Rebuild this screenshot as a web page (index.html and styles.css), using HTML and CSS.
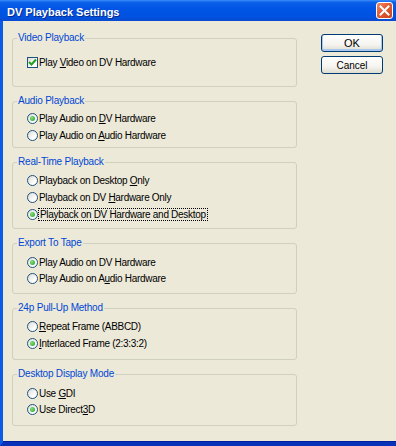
FILE: index.html
```html
<!DOCTYPE html>
<html>
  <head>
    <title>DV Playback Settings</title>
    <link rel="stylesheet" href="styles.css">
  </head>
  <body>
    <div class="window">
      <div class="titlebar">
        <span class="title">DV Playback Settings</span>
        <span class="close">
          <svg width="11" height="11" viewBox="0 0 11 11"><path d="M1.5 1.5 L9.5 9.5 M9.5 1.5 L1.5 9.5" stroke="#fff" stroke-width="2" stroke-linecap="square"/></svg>
        </span>
      </div>
      <div class="client">
        <div class="groups">
          <fieldset class="group g-video">
            <legend>Video Playback</legend>
            <label class="opt"><span class="check"><svg width="9" height="9" viewBox="0 0 9 9"><path d="M1 4 L3.5 6.5 L8 1.5" stroke="#21a121" stroke-width="2" fill="none"/></svg></span><span>Play <u>V</u>ideo on DV Hardware</span></label>
          </fieldset>

          <fieldset class="group g-audio">
            <legend>Audio Playback</legend>
            <label class="opt"><span class="radio on"></span><span>Play Audio on <u>D</u>V Hardware</span></label>
            <label class="opt"><span class="radio"></span><span>Play Audio on <u>A</u>udio Hardware</span></label>
          </fieldset>

          <fieldset class="group g-realtime">
            <legend>Real-Time Playback</legend>
            <label class="opt"><span class="radio"></span><span>Playback on Desktop <u>O</u>nly</span></label>
            <label class="opt"><span class="radio"></span><span>Playback on DV <u>H</u>ardware Only</span></label>
            <label class="opt"><span class="radio on"></span><span class="focus">Playback on DV Hardware and Desktop</span></label>
          </fieldset>

          <fieldset class="group g-export">
            <legend>Export To Tape</legend>
            <label class="opt"><span class="radio on"></span><span>Play Audio on DV Hardware</span></label>
            <label class="opt"><span class="radio"></span><span>Play Audio on A<u>u</u>dio Hardware</span></label>
          </fieldset>

          <fieldset class="group g-pulldown">
            <legend>24p Pull-Up Method</legend>
            <label class="opt"><span class="radio"></span><span><u>R</u>epeat Frame (ABBCD)</span></label>
            <label class="opt"><span class="radio on"></span><span><u>I</u>nterlaced Frame (2:3:3:2)</span></label>
          </fieldset>

          <fieldset class="group g-display">
            <legend>Desktop Display Mode</legend>
            <label class="opt"><span class="radio"></span><span>Use <u>G</u>DI</span></label>
            <label class="opt"><span class="radio on"></span><span>Use Direct<u>3</u>D</span></label>
          </fieldset>
        </div>

        <div class="buttons">
          <button class="btn default">OK</button>
          <button class="btn">Cancel</button>
        </div>
      </div>
    </div>
  </body>
</html>
```

FILE: styles.css
```css
body {
  margin: 0;
  font-family: "Liberation Sans", Arial, sans-serif;
  font-size: 10px;
  color: #000;
  background: #ece9d8;
}

.window {
  width: 396px;
  height: 446px;
  display: flex;
  flex-direction: column;
}

.titlebar {
  height: 21px;
  flex: none;
  display: flex;
  align-items: center;
  justify-content: space-between;
  padding: 0 3px 0 7px;
  background: linear-gradient(#3a8cf8 0%, #0a5fe8 12%, #0055e5 40%, #0052e0 80%, #0a4ad0 100%);
}

.title {
  color: #fff;
  font-weight: bold;
  font-size: 11px;
  padding-top: 2px;
  text-shadow: 1px 1px 0 #0a2a8a;
}

.close {
  width: 17px;
  height: 17px;
  box-sizing: border-box;
  border: 1px solid #fff;
  border-radius: 3px;
  background: linear-gradient(135deg, #f08a68 0%, #e25a32 45%, #c9431f 100%);
  display: flex;
  align-items: center;
  justify-content: center;
}

.client {
  flex: 1;
  display: flex;
  border-left: 3px solid #0a5ce6;
  border-bottom: 4px solid #0833b8;
  box-shadow: inset 0 -1px 0 #001ea0;
  background: #ece9d8;
}

.groups {
  width: 285px;
  margin: 11px 0 0 9px;
  display: flex;
  flex-direction: column;
  gap: 8px;
}

.group {
  margin: 0;
  min-width: 0;
  border: 1px solid #d0d0bf;
  border-radius: 3px;
  padding: 4px 0 7px 14px;
}

.group legend {
  color: #0046d5;
  font-size: 10px;
  line-height: 12px;
  padding: 0 1px;
  margin-left: -10px;
  letter-spacing: -0.2px;
}

.g-video { padding-top: 10px; padding-bottom: 15px; }
.g-audio { padding-top: 3px; padding-bottom: 3px; }
.g-realtime { padding-top: 4px; padding-bottom: 5px; }
.g-export { padding-top: 5px; padding-bottom: 7px; }
.g-pulldown { padding-top: 4px; padding-bottom: 7px; }
.g-display { padding-top: 5px; padding-bottom: 8px; }

.opt {
  display: flex;
  align-items: center;
  gap: 1px;
  height: 17px;
  white-space: nowrap;
  letter-spacing: -0.3px;
}

.g-export .opt,
.g-display .opt {
  height: 16px;
}

.radio {
  width: 11px;
  height: 11px;
  box-sizing: border-box;
  border: 1px solid #1c5180;
  border-radius: 50%;
  background: linear-gradient(135deg, #dcdbd3 0%, #fff 70%);
  display: flex;
  align-items: center;
  justify-content: center;
  flex: none;
}

.radio.on::after {
  content: "";
  width: 5px;
  height: 5px;
  border-radius: 50%;
  background: radial-gradient(circle at 35% 35%, #7fe07f, #21a121);
}

.check {
  width: 11px;
  height: 11px;
  box-sizing: border-box;
  border: 1px solid #1c5180;
  background: linear-gradient(135deg, #dcdbd3 0%, #fff 70%);
  display: flex;
  align-items: center;
  justify-content: center;
  flex: none;
}

.focus {
  outline: 1px dotted #000;
  padding: 0 1px;
}

u {
  text-decoration-thickness: 1px;
  text-underline-offset: 1px;
}

.buttons {
  margin: 13px 0 0 24px;
  display: flex;
  flex-direction: column;
  gap: 4px;
}

.btn {
  width: 62px;
  height: 18px;
  padding: 0;
  font-family: "Liberation Sans", Arial, sans-serif;
  font-size: 10px;
  color: #000;
  border: 1px solid #003c74;
  border-radius: 3px;
  background: linear-gradient(#fff 0%, #f5f4ef 60%, #dedcd0 100%);
}

.btn.default {
  box-shadow: inset 0 -1px 0 1px #a8c8f0, inset 1px 0 0 #cfe0f8;
  font-size: 11px;
}
```
